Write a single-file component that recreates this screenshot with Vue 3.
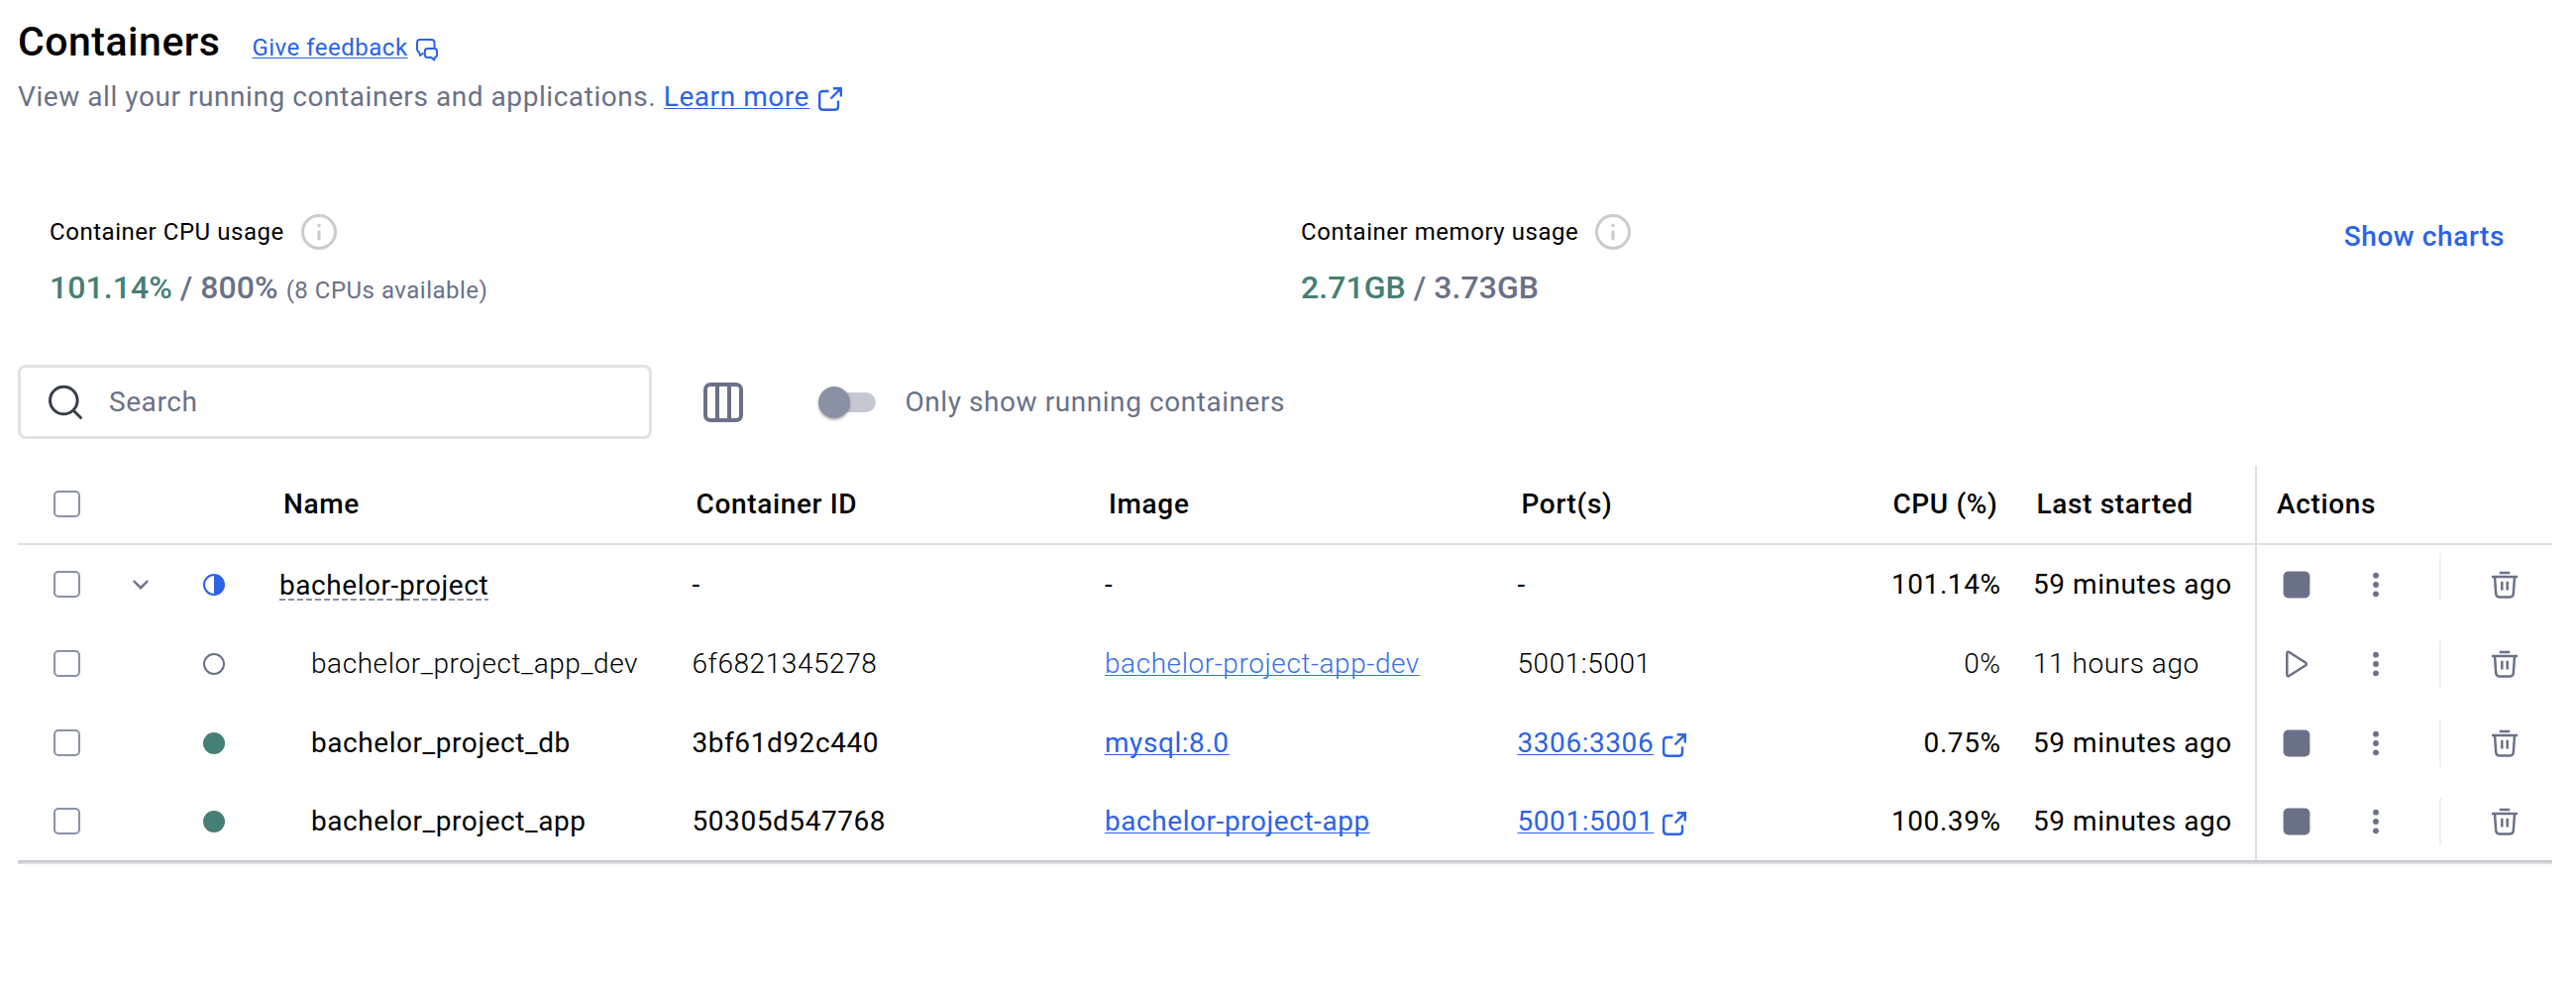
<script setup>
import { h } from 'vue'

const rows = [
  { status: 'partial', name: 'bachelor-project', group: true, id: '-', image: '-', port: '-', cpu: '101.14%', started: '59 minutes ago', running: true },
  { status: 'stopped', name: 'bachelor_project_app_dev', id: '6f6821345278', image: 'bachelor-project-app-dev', imageLink: true, port: '5001:5001', cpu: '0%', started: '11 hours ago', running: false },
  { status: 'running', name: 'bachelor_project_db', id: '3bf61d92c440', image: 'mysql:8.0', imageLink: true, port: '3306:3306', portLink: true, cpu: '0.75%', started: '59 minutes ago', running: true },
  { status: 'running', name: 'bachelor_project_app', id: '50305d547768', image: 'bachelor-project-app', imageLink: true, port: '5001:5001', portLink: true, cpu: '100.39%', started: '59 minutes ago', running: true },
]

const ExternalIcon = () =>
  h('svg', { width: 24, height: 24, viewBox: '0 0 24 24', fill: 'none', stroke: 'currentColor', 'stroke-width': 2.4 }, [
    h('path', { d: 'M10.500 4H5C2.500 4 1.200 5.200 1.200 7.500v12c0 2.200 1.300 3.300 3.800 3.300h11.500c2.500 0 3.500-1.100 3.500-3.300V13.500' }),
    h('path', { d: 'M12.500 11.500 22.700 1.300M14.800 1.300h8V9.500' }),
  ])

const InfoIcon = () =>
  h('svg', { width: 36, height: 36, viewBox: '0 0 36 36', fill: 'none', stroke: '#cccccc' }, [
    h('circle', { cx: 18, cy: 18, r: 16.5, 'stroke-width': 3 }),
    h('path', { d: 'M18 17.800v7', 'stroke-width': 3.2, 'stroke-linecap': 'round' }),
    h('circle', { cx: 18, cy: 11.6, r: 1.8, fill: '#cccccc', stroke: 'none' }),
  ])
</script>

<template>
  <main class="page">
    <header class="title-row">
      <h1>Containers</h1>
      <a class="feedback">
        <span class="link">Give feedback</span>
        <svg width="24" height="24" viewBox="0 0 24 24" fill="none" stroke="currentColor" stroke-width="2" stroke-linejoin="round">
          <path d="M19.500 10.500V5c0-2-1-3-3-3H5C3 2 2 3 2 5v6.500c0 1.500.6 2.500 2 3.200L5 18l3.500-2.500" />
          <path d="M12.500 11h6.800c1.800 0 2.700.9 2.700 2.700v3.600c0 1.500-.8 2.500-2.200 2.700l-.6 2.500-3-2.500h-3.700c-1.800 0-2.700-.9-2.700-2.700v-3.600c0-1.800.9-2.700 2.700-2.700z" />
        </svg>
      </a>
    </header>
    <p class="subtitle">
      <span>View all your running containers and applications.&nbsp;</span>
      <a class="link">Learn more</a>
      <ExternalIcon class="ext" />
    </p>

    <section class="stats">
      <div class="stat cpu-stat">
        <div class="label">Container CPU usage<InfoIcon class="info" /></div>
        <div class="value"><b>101.14%</b> / 800% <small>(8 CPUs available)</small></div>
      </div>
      <div class="stat">
        <div class="label">Container memory usage<InfoIcon class="info" /></div>
        <div class="value"><b>2.71GB</b> / 3.73GB</div>
      </div>
      <a class="charts">Show charts</a>
    </section>

    <section class="toolbar">
      <div class="search">
        <svg width="36" height="36" viewBox="0 0 36 36" fill="none" stroke="#393f49" stroke-width="3" stroke-linecap="round">
          <circle cx="16.300" cy="16" r="13.800" />
          <path d="m26.200 26.200 7.300 7.300" />
        </svg>
        <span>Search</span>
      </div>
      <svg class="columns" width="40" height="40" viewBox="0 0 40 40" fill="none" stroke="#6a7187" stroke-width="4">
        <rect x="2" y="2" width="36" height="36" rx="5" />
        <path d="M14 2v36M26 2v36" />
      </svg>
      <span class="switch"><i class="thumb" /></span>
      <span class="switch-label">Only show running containers</span>
    </section>

    <section class="table">
      <div class="grid head">
        <div class="center"><i class="checkbox" /></div>
        <div />
        <div />
        <div class="cell">Name</div>
        <div class="cell">Container ID</div>
        <div class="cell">Image</div>
        <div class="cell">Port(s)</div>
        <div class="cell right">CPU (%)</div>
        <div class="cell">Last started</div>
        <div class="actions">Actions</div>
      </div>

      <div v-for="row in rows" :key="row.name" class="grid row" :class="{ light: !row.running, group: row.group }">
        <div class="center"><i class="checkbox" /></div>
        <div class="center">
          <svg v-if="row.group" width="18" height="12" viewBox="0 0 18 12" fill="none" stroke="#6a7187" stroke-width="2.400">
            <path d="m1.800 2 7.200 7.200L16.200 2" />
          </svg>
        </div>
        <div class="center">
          <svg width="22" height="22" viewBox="0 0 22 22">
            <circle v-if="row.status === 'running'" cx="11" cy="11" r="11" fill="#467f75" />
            <circle v-else-if="row.status === 'stopped'" cx="11" cy="11" r="10" fill="none" stroke="#6a7187" stroke-width="2" />
            <template v-else>
              <circle cx="11" cy="11" r="10" fill="none" stroke="#2b63e6" stroke-width="2" />
              <path d="M11 1a10 10 0 0 1 0 20z" fill="#2b63e6" />
            </template>
          </svg>
        </div>
        <div class="cell name"><span>{{ row.name }}</span></div>
        <div class="cell">{{ row.id }}</div>
        <div class="cell"><span :class="{ link: row.imageLink }">{{ row.image }}</span></div>
        <div class="cell">
          <span :class="{ link: row.portLink }">{{ row.port }}</span>
          <ExternalIcon v-if="row.portLink" class="ext" />
        </div>
        <div class="cell right">{{ row.cpu }}</div>
        <div class="cell started">{{ row.started }}</div>
        <div class="actions">
          <svg width="28" height="28" viewBox="0 0 28 28">
            <rect v-if="row.running" x=".6" y=".6" width="26.800" height="26.800" rx="5" fill="#6a7187" />
            <path v-else d="M4.300 3.200v21.600c0 1.400 1 1.900 2.100 1.200l16.500-10.500c1.300-.9 1.300-2.100 0-3L6.400 2C5.300 1.300 4.300 1.800 4.300 3.200z" fill="none" stroke="#6a7187" stroke-width="2.500" />
          </svg>
          <svg class="dots" width="28" height="28" viewBox="0 0 28 28" fill="#6a7187">
            <circle cx="14" cy="4.700" r="2.900" />
            <circle cx="14" cy="14" r="2.900" />
            <circle cx="14" cy="23.300" r="2.900" />
          </svg>
          <i class="divider" />
          <svg width="28" height="28" viewBox="0 0 28 28" fill="none" stroke="#6a7187" stroke-width="2.500">
            <path d="M8.800 1.900h10.400M1 6h26M4 6l1.200 17c.2 2.400 1.200 3.400 3.400 3.400h10.800c2.200 0 3.200-1 3.400-3.400L24 6M11.300 10.800v8.800M16.700 10.800v8.800" />
          </svg>
        </div>
      </div>
    </section>
  </main>
</template>

<style>
body {
  background: #fff;
}
</style>

<style scoped>
.page {
  box-sizing: border-box;
  height: 1006px;
  padding: 16px 24px 0 18px;
  font: 400 28px/40px Roboto, sans-serif;
  letter-spacing: 0.56px;
  color: #000;
  white-space: nowrap;
}
svg {
  display: block;
  flex: none;
}
.link {
  color: #2b63e6;
  text-decoration: underline 1px;
  text-underline-offset: 2px;
  text-decoration-skip-ink: none;
}
.title-row {
  display: flex;
  align-items: baseline;
  height: 52px;
}
h1 {
  margin: 0;
  font-size: 41px;
  line-height: 52px;
  font-weight: 500;
  letter-spacing: 0.5px;
}
.feedback {
  display: flex;
  align-items: center;
  margin-left: 32px;
  font-size: 24px;
  letter-spacing: 0.5px;
  color: #2b63e6;
}
.feedback svg {
  margin: 4px 0 0 7px;
}
.subtitle {
  display: flex;
  align-items: center;
  height: 40px;
  margin: 10px 0 0;
  color: #6a7187;
}
.ext {
  margin-left: 9px;
  margin-top: 4px;
  color: #2b63e6;
}
.stats {
  display: flex;
  height: 250px;
  box-sizing: border-box;
  padding: 96px 0 0 32px;
}
.stat {
  width: 500px;
}
.cpu-stat {
  width: 1263px;
}
.label {
  display: flex;
  align-items: center;
  height: 40px;
  font-size: 24px;
  letter-spacing: 0.54px;
}
.info {
  margin-left: 17px;
}
.value {
  height: 40px;
  margin-top: 16px;
  font-size: 32px;
  font-weight: 500;
  letter-spacing: 0.05px;
  color: #6a7187;
}
.value b {
  font-weight: 500;
  color: #457f74;
}
.value small {
  font-size: 24px;
  font-weight: 400;
  letter-spacing: 0.5px;
}
.charts {
  margin: 5px 48px 0 auto;
  font-weight: 500;
  letter-spacing: 0.6px;
  color: #2b63e6;
}
.toolbar {
  display: flex;
  align-items: center;
  height: 75px;
  color: #6a7187;
}
.search {
  box-sizing: border-box;
  display: flex;
  align-items: center;
  width: 640px;
  height: 75px;
  padding-left: 27px;
  border: 3px solid #e1e2e6;
  border-radius: 8px;
}
.search span {
  margin-left: 26px;
}
.columns {
  margin-left: 52px;
}
.switch {
  position: relative;
  width: 52px;
  height: 20px;
  margin-left: 82px;
  border-radius: 10px;
  background: #c5c8d1;
}
.thumb {
  position: absolute;
  left: -6px;
  top: -6px;
  width: 32px;
  height: 32px;
  border-radius: 50%;
  background: #8b91a5;
  box-shadow: 0 2px 2px rgba(0, 0, 0, 0.2), 0 1px 4px rgba(0, 0, 0, 0.12);
}
.switch-label {
  margin-left: 29.500px;
}
.table {
  margin-top: 27px;
  border-bottom: 2px solid #dedede;
}
.grid {
  display: grid;
  grid-template-columns: 100px 48px 100px 416.500px 416.500px 416.500px 370px 150px 240.500px 300px;
  height: 80px;
}
.head {
  box-sizing: border-box;
  border-bottom: 2px solid #e0e0e0;
  font-weight: 500;
  letter-spacing: 0.65px;
}
.row:last-child {
  height: 78px;
  border-bottom: 2px solid #c4c8d1;
}
.center {
  display: flex;
  align-items: center;
  justify-content: center;
}
.cell {
  display: flex;
  align-items: center;
  padding: 0 16px;
}
.head .cell {
  padding: 0 19px 0 20px;
}
.started {
  padding-left: 16.500px;
}
.right {
  justify-content: flex-end;
}
.light {
  font-weight: 300;
}
.light .link {
  color: #3a6fea;
}
.name {
  padding-left: 48px;
}
.group .name {
  padding-left: 16px;
}
.group .name span {
  height: 32px;
  line-height: 34px;
  background: repeating-linear-gradient(90deg, #8b91a5 0 6px, transparent 6px 9px) left bottom / 100% 2px no-repeat;
  margin-top: -1px;
}
.checkbox {
  box-sizing: border-box;
  width: 27px;
  height: 27px;
  margin: -1px 1px 0 0;
  border: 2.500px solid #8b91a5;
  border-radius: 5px;
}
.actions {
  display: flex;
  align-items: center;
  padding-left: 26px;
  border-left: 2px solid #dedede;
}
.head .actions {
  padding-left: 20px;
}
.dots {
  margin-left: 52px;
}
.divider {
  width: 2px;
  height: 48px;
  margin: 0 50px;
  background: #f0f0f0;
}
.group .divider {
  margin-bottom: 16px;
}
</style>
